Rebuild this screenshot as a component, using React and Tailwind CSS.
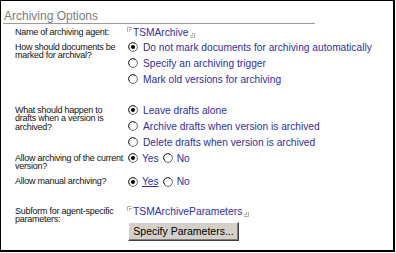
const Radio = ({ on }) => (
  <svg width="10" height="10" viewBox="0 0 10 10" className="shrink-0">
    <circle cx="5" cy="5" r="4.4" fill="#fff" stroke="#6a6a6a" strokeWidth="1" />
    <path d="M1.8 7.6 A4 4 0 0 1 7.6 1.8" fill="none" stroke="#222" strokeWidth="0.8" />
    {on && <circle cx="5" cy="5" r="2" fill="#000" />}
  </svg>
);

const OpenMark = () => (
  <svg width="5" height="5" viewBox="0 0 5 5" className="shrink-0 self-start mt-[1px]">
    <path d="M0.5 5V0.5H5M2.5 5V2.5H5" fill="none" stroke="#9a9a9a" strokeWidth="0.8" />
  </svg>
);

const CloseMark = () => (
  <svg width="5" height="5" viewBox="0 0 5 5" className="shrink-0 self-end">
    <path d="M4.5 0V4.5H0M2.5 0V2.5H0" fill="none" stroke="#9a9a9a" strokeWidth="0.8" />
  </svg>
);

const Option = ({ on, children }) => (
  <div className="flex items-center h-4 pl-[1px] gap-[5px]">
    <Radio on={on} />
    <span className="text-[10.2px] leading-[13px] text-[#2f2f9c] whitespace-nowrap">{children}</span>
  </div>
);

const Label = ({ children, pt }) => (
  <div
    className={`w-[112px] shrink-0 text-[9px] tracking-[-0.25px] leading-[8.5px] text-[#111] whitespace-nowrap ${pt}`}
  >
    {children}
  </div>
);

const YesNo = ({ focus }) => (
  <div className="flex items-center h-4 pl-[1px] text-[10.2px] leading-[13px] text-[#2f2f9c]">
    <Radio on />
    <span className={`ml-[4px] ${focus ? 'underline underline-offset-1' : ''}`}>Yes</span>
    <span className="ml-[4px]">
      <Radio />
    </span>
    <span className="ml-[4px]">No</span>
  </div>
);

const App = () => {
  return (
    <div className="w-[395px] h-[252px] border-t border-l border-r-2 border-b-2 border-black bg-white font-['Liberation_Sans',Arial,sans-serif]">
      {/* header */}
      <div className="ml-[2px] mt-[9px] w-[312px] border-b border-[#9a9a9a] pl-[1px] text-[12px] leading-[13px] text-[#7b7b7b]">
        Archiving Options
      </div>

      <div className="pl-[14px]">
        {/* agent name */}
        <div className="flex items-center h-[13px] mt-[2px]">
          <Label pt="">Name of archiving agent:</Label>
          <div className="flex h-[13px]">
            <OpenMark />
            <span className="ml-[1px] text-[10.2px] leading-[13px] text-[#2f2f9c]">TSMArchive</span>
            <span className="ml-[2px] flex items-end pb-[1px]"><CloseMark /></span>
          </div>
        </div>

        {/* marking */}
        <div className="flex">
          <Label pt="pt-[3.75px]">
            How should documents be
            <br />
            marked for archival?
          </Label>
          <div>
            <Option on>Do not mark documents for archiving automatically</Option>
            <Option>Specify an archiving trigger</Option>
            <Option>Mark old versions for archiving</Option>
          </div>
        </div>

        {/* drafts */}
        <div className="flex mt-[15px]">
          <Label pt="pt-[3.75px]">
            What should happen to
            <br />
            drafts when a version is
            <br />
            archived?
          </Label>
          <div>
            <Option on>Leave drafts alone</Option>
            <Option>Archive drafts when version is archived</Option>
            <Option>Delete drafts when version is archived</Option>
          </div>
        </div>

        {/* current version */}
        <div className="flex h-[23.5px]">
          <Label pt="pt-[3.75px]">
            Allow archiving of the current
            <br />
            version?
          </Label>
          <YesNo />
        </div>

        {/* manual */}
        <div className="flex h-4">
          <Label pt="pt-[3.75px]">Allow manual archiving?</Label>
          <YesNo focus />
        </div>

        {/* subform */}
        <div className="flex mt-[15px]">
          <Label pt="pt-[2.25px]">
            Subform for agent-specific
            <br />
            parameters:
          </Label>
          <div>
            <div className="flex h-[13px]">
              <OpenMark />
              <span className="ml-[1px] text-[10.3px] leading-[13px] text-[#2f2f9c]">TSMArchiveParameters</span>
              <span className="ml-[2px] flex items-end pb-[1px]"><CloseMark /></span>
            </div>
            <button className="mt-[0.5px] ml-[1px] w-[111px] h-[19px] bg-[#d4d0c8] border border-t-white border-l-white border-r-[#404040] border-b-[#404040] shadow-[inset_-1px_-1px_0_#808080] text-[10.5px] leading-[13px] text-black">
              Specify Parameters...
            </button>
          </div>
        </div>
      </div>
    </div>
  );
};

export default App;
